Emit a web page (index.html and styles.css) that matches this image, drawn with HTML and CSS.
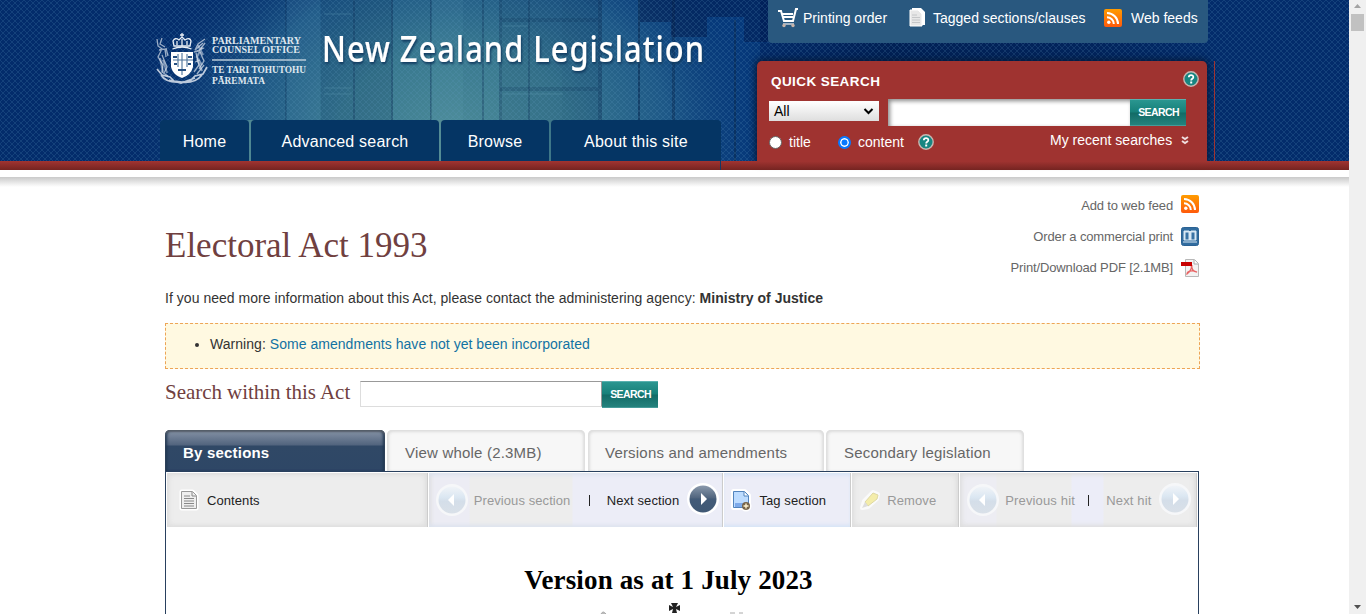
FILE: index.html
```html
<!DOCTYPE html>
<html lang="en">
<head>
<meta charset="utf-8">
<title>Electoral Act 1993 – New Zealand Legislation</title>
<link rel="stylesheet" href="styles.css">
</head>
<body>
<svg class="defs" width="0" height="0">
  <defs>
    <linearGradient id="orange" x2="0" y2="1"><stop stop-color="#ff9c00"/><stop offset="1" stop-color="#ff5a0c"/></linearGradient>
    <linearGradient id="orb" x2="0" y2="1"><stop stop-color="#8a99ac"/><stop offset=".45" stop-color="#52667f"/><stop offset=".5" stop-color="#435b78"/><stop offset="1" stop-color="#3f5874"/></linearGradient>
    <linearGradient id="pale" x2="0" y2="1"><stop stop-color="#f1f4f8"/><stop offset=".4" stop-color="#dbe7f2"/><stop offset=".55" stop-color="#d4dee9"/><stop offset="1" stop-color="#d9e0e8"/></linearGradient>
    <symbol id="feed" viewBox="0 0 18 18"><rect width="18" height="18" rx="2" fill="url(#orange)"/><circle cx="4.8" cy="13.3" r="1.7" fill="#fff"/><path d="M3 8.2a6.800 6.800 0 0 1 6.800 6.800M3 4a11 11 0 0 1 11 11" fill="none" stroke="#fff" stroke-width="2"/></symbol>
    <symbol id="help" viewBox="0 0 16 16"><circle cx="8" cy="8" r="7.2" fill="#178681" stroke="#c8b8b2" stroke-width="1.4"/><path d="M5.800 6.200c.1-2.800 4.700-2.700 4.500 0-.1 1.700-2.100 1.500-2.100 3.200" fill="none" stroke="#fff" stroke-width="1.8"/><rect x="7.2" y="10.5" width="2" height="2" fill="#fff"/></symbol>
    <symbol id="left" viewBox="0 0 32 32"><circle cx="16" cy="16" r="16" fill="#f6f7f9"/><circle cx="16" cy="16" r="13.5" fill="url(#pale)"/><path d="M18 10v12l-6-6z" fill="#fff"/></symbol>
    <symbol id="right-pale" viewBox="0 0 32 32"><circle cx="16" cy="16" r="16" fill="#f6f7f9"/><circle cx="16" cy="16" r="13.5" fill="url(#pale)"/><path d="M14 10v12l6-6z" fill="#fff"/></symbol>
    <symbol id="right" viewBox="0 0 32 32"><circle cx="16" cy="16" r="16" fill="#fff"/><circle cx="16" cy="16" r="13.5" fill="url(#orb)"/><path d="M14 10v12l6-6z" fill="#fff"/></symbol>
  </defs>
</svg>
<div class="page">
  <header class="header">
    <svg class="backdrop" width="1349" height="161" viewBox="0 0 1349 161">
      <defs>
        <pattern id="weave" width="6" height="6" patternUnits="userSpaceOnUse"><path d="M0 0l6 6M6 0L0 6" stroke="#5f9ac0" stroke-opacity=".24" stroke-width=".8"/></pattern>
        <radialGradient id="glow" gradientUnits="userSpaceOnUse" cx="0" cy="0" r="1" gradientTransform="translate(455 135) scale(330 250)"><stop stop-color="#4b8a97"/><stop offset=".35" stop-color="#38788f"/><stop offset=".65" stop-color="#205b88" stop-opacity=".9"/><stop offset="1" stop-color="#042f70" stop-opacity="0"/></radialGradient>
        <linearGradient id="shade"><stop stop-color="#001844" stop-opacity="0"/><stop offset=".3" stop-color="#001844" stop-opacity=".7"/><stop offset=".75" stop-color="#001844" stop-opacity=".45"/><stop offset="1" stop-color="#001844" stop-opacity="0"/></linearGradient>
      </defs>
      <rect width="1349" height="161" fill="#032c6b"/>
      <rect x="600" width="160" height="161" fill="#073e81" opacity=".75"/>
      <rect x="100" width="690" height="161" fill="url(#glow)"/>
      <g fill="#0a2b53">
        <rect x="285" width="1.500" height="120" opacity=".3"/><rect x="287" width="33" height="120" fill="#73b8cc" opacity=".08"/>
        <rect x="321" width="32" height="120" opacity=".14"/><rect x="353" width="2" height="120" opacity=".4"/>
        <rect x="355" width="36" height="120" opacity=".15"/><rect x="391" width="2" height="120" opacity=".4"/>
        <rect x="430" width="1.500" height="120" opacity=".4"/><rect x="432" width="31" height="120" fill="#83cbd1" opacity=".07"/>
        <rect x="482" width="2" height="120" opacity=".3"/><rect x="499" width="3" height="120" opacity=".3"/>
        <rect x="502" width="60" height="120" opacity=".1"/><rect x="528" width="2" height="120" opacity=".3"/><rect x="562" width="36" height="120" opacity=".15"/>
        <rect x="598" width="4" height="120" opacity=".4"/><rect x="638" width="2" height="120" opacity=".6"/><rect x="672" width="3" height="120" opacity=".5"/>
        <rect x="734" y="20" width="2" height="141" opacity=".6"/><rect x="500" y="18" width="98" height="4" opacity=".2"/><rect x="500" y="87" width="98" height="4" opacity=".2"/>
      </g>
      <path d="M324 14h27M324 88h27M324 94h27M503 26h25M503 94h60" stroke="#69a9b9" stroke-opacity=".3"/>
      <path d="M640 0h128v17h-61v20h-36V22h-31zM744 17h25v25h-25z" fill="#001240" opacity=".4"/>
      <rect x="740" y="43" width="478" height="20" fill="url(#shade)" opacity=".8"/>
      <rect width="1349" height="161" fill="url(#weave)"/>
    </svg>
    <div class="brand-side">
      <svg class="brand" width="560" height="120" viewBox="155 0 560 120" fill="#fff">
        <g stroke="#e8eef5" fill="none" stroke-width="1.3">
          <path d="M174 46l-1-5q2-4 6-1l3-3 3 3q5-3 6 1l-1 5zM182 37v-4M180 35h4" stroke-width="1.3"/>
          <path d="M172.500 49q10-4 19 0M177 41v4M182 39v7M187 41v4"/>
          <path d="M157 39l1 7 4 3-4 8 5 8-1 7 6 4M162 38l-2 6 5 3M159 50l6-1 1 8M162 55l5 12-3 6M166 48l2 8M205 39l-7 5-3 6 8-7M205 43l-6 8-5 1 10-4M200 52l4 9-5 8M196 53l3 12-5 7M200 60l-5 2M204 65l-7 9" opacity=".65"/>
          <path d="M198 45l5 10M202 47l-5 10 5 8M197 59l5 12M160 58l3 14M163 60l4 13" stroke-width="2" opacity=".5"/>
          <path d="M157 69l5 6 8 2 4 4 8 1 8-1 5-5 8-2 4-7M161 75q5 8 19 7 15 2 22-7M169 80l12 3 14-5" opacity=".8" stroke-width="1.7"/>
        </g>
        <path d="M171 52h22v15q-2 8-11 11-9-3-11-11z"/>
        <path d="M178 54v13M187 54v13M173 60h20M182 53v22" stroke="#4c739a" stroke-width="1.1"/>
        <path d="M173 57h4M188 57h4M174 64h3M188 64h3M178 70h8" stroke="#244f81" stroke-width="2"/>
        <g class="office" fill="#dfe7ee">
          <text x="212" y="43.500" textLength="89" lengthAdjust="spacingAndGlyphs">PARLIAMENTARY</text>
          <text x="212" y="53.200" textLength="88" lengthAdjust="spacingAndGlyphs">COUNSEL OFFICE</text>
          <text x="212" y="73" textLength="94" lengthAdjust="spacingAndGlyphs">TE TARI TOHUTOHU</text>
          <text x="212" y="83.500" textLength="53" lengthAdjust="spacingAndGlyphs">PĀREMATA</text>
        </g>
        <path d="M212 60h94" stroke="#b8cbd9" stroke-width="1.7"/>
        <text class="site-title" x="322" y="62" textLength="383" lengthAdjust="spacingAndGlyphs">New Zealand Legislation</text>
      </svg>
      <nav class="nav"><a class="home">Home</a><a class="advanced">Advanced search</a><a class="browse">Browse</a><a class="about">About this site</a></nav>
    </div>
    <div class="tool-side">
      <div class="tools">
        <svg width="22" height="20" viewBox="0 0 22 20"><path d="M1 3h3l3 10h9l3-12h2M5 6h11M6 9h10" fill="none" stroke="#fff" stroke-width="2"/><path d="M6 16h11" stroke="#d7dce2" stroke-width="1.4"/><circle cx="7" cy="17.5" r="1.7" fill="#c9b4a9"/><circle cx="16" cy="17.5" r="1.7" fill="#c9b4a9"/></svg><span class="print-link">Printing order</span>
        <svg width="17" height="19" viewBox="0 0 17 19"><path d="M3 0h9l4 4v13H3z" fill="#fff"/><path d="M1 2h8l4 4v12H1z" fill="#e7e7e7" stroke="#fff"/><path d="M3 7h5M3 9.500h8M3 12h8M3 14.500h8" stroke="#c4c6c8"/></svg><span class="tag-link">Tagged sections/clauses</span>
        <svg width="18" height="19" viewBox="0 -1 18 19"><use href="#feed" width="18" height="18"/></svg><span>Web feeds</span>
      </div>
      <form class="quick">
        <div class="quick-head"><b>QUICK SEARCH</b><svg width="16" height="16"><use href="#help"/></svg></div>
        <div class="quick-line">
          <div class="select">All<svg width="11" height="7" viewBox="0 0 11 7"><path d="M1.500 1l4 4 4-4" fill="none" stroke="#000" stroke-width="2"/></svg></div>
          <input class="query" type="text" aria-label="Search"><span class="search-button">SEARCH</span>
        </div>
        <div class="quick-options"><i class="radio"></i><span class="title-label">title</span><i class="radio selected"></i><span class="content-label">content</span><svg width="16" height="16"><use href="#help"/></svg><span class="recent">My recent searches</span><svg class="chevrons" width="8" height="9" viewBox="0 0 8 9"><path d="M1 1l3 2 3-2M1 5l3 2 3-2" fill="none" stroke="#f0dede" stroke-width="2"/></svg></div>
      </form>
    </div>
  </header>
  <div class="red-strip"></div>
  <div class="header-shadow"></div>
  <main class="content">
    <div class="title-row">
      <h1>Electoral Act 1993</h1>
      <div class="actions">
        <a><span>Add to web feed</span><svg class="feed-icon" width="18" height="18"><use href="#feed"/></svg></a>
        <a><span>Order a commercial print</span><svg width="18" height="19" viewBox="0 0 18 19"><rect x=".5" y=".5" width="17" height="18" rx="2" fill="#316c9f" stroke="#2b6294"/><path d="M3 4h5l1 1 1-1h5v9H3zM2 15h14" fill="#d9e8f4" stroke="#d9e8f4" stroke-width="1"/><path d="M4.500 5.500h3v7h-3zM10.500 5.500h3v7h-3z" fill="#3972a4"/></svg></a>
        <a><span>Print/Download PDF [2.1MB]</span><svg width="18" height="18" viewBox="0 0 18 18"><path d="M4.500.5h9l4 4v13h-13z" fill="#f3f3f3" stroke="#b8b8b8"/><path d="M13 1v4h4" fill="#fff" stroke="#aaa"/><path d="M9 6c3 1 1 6-3 9 0-3 5-4 10-2-4 0-6-4-5-7" fill="none" stroke="#e86666" stroke-width="1.300"/><path d="M0 3h11v4H0z" fill="#c80000"/></svg></a>
      </div>
    </div>
    <p class="agency">If you need more information about this Act, please contact the administering agency: <b>Ministry of Justice</b></p>
    <div class="warning"><i></i><span>Warning: <a>Some amendments have not yet been incorporated</a></span></div>
    <div class="search-within"><h2>Search within this Act</h2><input type="text" aria-label="Search within this Act"><span class="search-button">SEARCH</span></div>
    <div class="tabs"><b class="tab active">By sections</b><span class="tab whole">View whole (2.3MB)</span><span class="tab versions">Versions and amendments</span><span class="tab secondary">Secondary legislation</span></div>
    <section class="document">
      <div class="toolbar">
        <div class="cell contents"><svg width="20" height="22" viewBox="0 0 20 22"><path d="M2.500 2.500h11l4 4v13h-15z" fill="#f3f3f3" stroke="#fff" stroke-width="4" stroke-linejoin="round"/><path d="M2.500 2.500h11l4 4v13h-15z" fill="#efefef" stroke="#999"/><path d="M13 3v4h4M5 7h6M5 9.500h10M5 12h10M5 14.500h10M5 17h10" fill="none" stroke="#888"/></svg><span>Contents</span></div>
        <div class="cell sections"><svg width="32" height="32"><use href="#left"/></svg><span class="muted prev">Previous section</span><i class="bar"></i><span class="next">Next section</span><svg class="go" width="32" height="32"><use href="#right"/></svg></div>
        <div class="cell tag"><svg width="22" height="24" viewBox="0 0 22 24"><path d="M3.500 3.500h11l4 4v12h-15z" stroke="#fff" stroke-width="5" stroke-linejoin="round"/><circle cx="16" cy="18" r="5.500" fill="#fff"/><path d="M3.500 3.500h11l4 4v12h-15z" fill="#bddcff" stroke="#5384bd"/><path d="M14 4v4h4" fill="#fff" stroke="#5384bd"/><path d="M5 16h10M5 18h10" stroke="#3f79d4"/><circle cx="16" cy="18" r="4" fill="#77654b"/><path d="M13.500 18h5M16 15.500v5" stroke="#fff3cf" stroke-width="1.400"/></svg><span>Tag section</span></div>
        <div class="cell remove"><svg width="23" height="22" viewBox="0 0 23 22"><path d="M3 19l2-7 9-9 5 2-1 5-9 8z" fill="#fff" stroke="#fafafa" stroke-width="4" stroke-linejoin="round"/><path d="M6 13l8-9 5 2-1 4-9 7z" fill="#f4edaa" stroke="#ded8a3"/><path d="M6 13l3 4-6 2z" fill="#ddd"/></svg><span class="muted">Remove</span></div>
        <div class="cell hits"><svg width="32" height="32"><use href="#left"/></svg><span class="muted prev-hit">Previous hit</span><i class="bar"></i><span class="muted next-hit">Next hit</span><svg class="go" width="32" height="32"><use href="#right-pale"/></svg></div>
      </div>
      <h3>Version as at 1 July 2023</h3>
      <svg class="crest" width="160" height="12" viewBox="0 0 160 12"><path d="M75 1h7l-2 4 4-2v6l-4-2 1 4h-5l1-4-4 2V3l4 2z" fill="#222"/><path d="M5 12q2-4 5 0M134 11h5M143 11h4" stroke="#aaa" fill="#bbb"/></svg>
    </section>
  </main>
</div>
<div class="scrollbar"><svg width="17" height="14" viewBox="0 0 17 14"><path d="M5 8l3.500-4L12 8z" fill="#a3a3a3"/></svg><i></i><svg width="17" height="14" viewBox="0 0 17 14"><path d="M5 5l3.500 4L12 5z" fill="#505050"/></svg></div>
</body>
</html>
```
FILE: styles.css
```css
* { box-sizing: border-box; }
body { margin: 0; width: 1366px; height: 614px; overflow: hidden; display: flex; font-family: "Liberation Sans", Arial, sans-serif; font-size: 14px; color: #333; background: #fff; }
svg { display: block; flex: none; }
.defs { position: absolute; }
h1, h2, h3, p { margin: 0; }
.page { width: 1349px; height: 614px; overflow: hidden; }
.header { position: relative; display: flex; width: 1349px; height: 161px; padding-left: 155px; }
.backdrop { position: absolute; inset: 0; }
.brand-side { position: relative; width: 602px; height: 161px; }
.brand { overflow: visible; }
.office { font: bold 10.5px "Liberation Serif", serif; }
.site-title { font: 500 37px "Noto Sans", sans-serif; letter-spacing: 1.2px; stroke: #fff; stroke-width: .2px; filter: drop-shadow(1px 2px 1px #123c61); }
.nav { display: flex; gap: 2px; margin-left: 5px; width: 561px; background: linear-gradient(90deg, transparent 80px, #4f8792 90px, #568e96 270px, #3c7587 400px, transparent 410px); }
.nav a { height: 41px; border-radius: 4px 4px 0 0; background: #053564; color: #fff; font-size: 16px; letter-spacing: .22px; line-height: 43px; text-align: center; }
.home { width: 89px; } .advanced { width: 188px; } .browse { width: 108px; }
.about { position: relative; width: 170px; }
.about::after { content: ""; position: absolute; z-index: 2; right: 0; top: 41px; width: 1px; height: 9px; background: #163865; }
.tool-side { position: relative; width: 458px; }
.tools { display: flex; width: 440px; height: 43px; margin-left: 11px; padding: 8px 0 0 9px; background: #29587f; border-radius: 0 0 4px 4px; color: #fff; line-height: 20px; }
.tools span { margin-left: 4px; white-space: nowrap; }
.tools .print-link { width: 106px; }
.tools .tag-link { width: 171px; margin-left: 7px; }
.tools span:last-child { margin-left: 9px; }
.quick { height: 100px; width: 450px; margin-top: 18px; background: #9f3330; border-radius: 5px 5px 0 0; color: #fff; padding: 10px 8px 0 12px; box-shadow: 0 0 7px 2px #041b3d; position: relative; }
.quick::after { content: ""; position: absolute; right: -8px; top: 0; height: 100px; width: 1px; background: #9f3330; }
.quick-head { display: flex; justify-content: space-between; height: 28px; padding-left: 2px; line-height: 21px; }
.quick-head b { font-size: 13.5px; letter-spacing: .42px; }
.quick-line { display: flex; }
.select { display: flex; align-items: center; justify-content: space-between; width: 110px; height: 20px; margin-top: 2px; padding: 0 5px; background: linear-gradient(#fff, #dedede); color: #000; }
.query { width: 242px; height: 27px; margin-left: 9px; border: 0; padding: 3px; box-shadow: inset 2px 2px 4px #888; background: #fff; outline: 0; }
.search-button { display: block; width: 56px; height: 27px; border-top: 1px solid #58b1af; border-bottom: 1px solid #469b99; background: linear-gradient(#2a9690, #168079 48%, #126b66 52%, #24827d); color: #fff; font-size: 10.5px; font-weight: bold; letter-spacing: -.6px; line-height: 25px; text-align: center; padding-left: 1px; }
.quick-options { display: flex; align-items: center; height: 32px; line-height: 20px; padding: 0 8px 0 0; }
.radio { flex: none; width: 13px; height: 13px; background: #fff; border: 1px solid #666; border-radius: 50%; }
.radio.selected { border: 2px solid #0878ff; background: #0878ff; box-shadow: inset 0 0 0 1.5px #fff; }
.title-label { width: 49px; margin-left: 7px; } .content-label { width: 54px; margin-left: 7px; margin-right: 6px; }
.recent { width: 124px; margin-left: auto; white-space: nowrap; margin-top: -4px; } .chevrons { margin: -3px 2px 0 7px; }
.red-strip { position: relative; height: 9px; background: linear-gradient(#a13431, #752421); }
.header-shadow { height: 17px; background: linear-gradient(#fff 7px, #c9c9c9 7px, #f5f5f5 15px, #fff 17px); }
.content { width: 1035px; margin-left: 165px; }
.title-row { display: flex; justify-content: space-between; height: 101px; padding-top: 6px; }
h1 { padding-top: 32px; font: 35px/42px "Liberation Serif", serif; color: #704040; box-sizing: content-box; height: 42px; }
.actions { display: flex; flex-direction: column; gap: 12px; color: #666; font-size: 13px; letter-spacing: -.14px; padding: 3px 1px 0 0; }
.actions a { height: 19px; display: flex; justify-content: flex-end; align-items: center; }
.actions svg { margin-left: 8px; }
.actions .feed-icon { margin-top: -3px; }
.agency { height: 35px; line-height: 20px; letter-spacing: .035px; }
.warning { display: flex; align-items: flex-start; width: 1035px; height: 46px; padding: 10px 0 0 29px; border: 1px dashed #eda556; background: #fff9e1; line-height: 20px; letter-spacing: .04px; }
.warning i { width: 4px; height: 4px; margin: 9px 11px 0 0; border-radius: 50%; background: #333; }
.warning a { color: #1272a3; }
.search-within { display: flex; padding-top: 12px; height: 61px; }
h2 { width: 195px; margin-top: -1px; font: 21px/24px "Liberation Serif", serif; letter-spacing: -.04px; color: #704040; white-space: nowrap; }
.search-within input { width: 242px; height: 26px; border: 1px solid #ddd; border-top-color: #999; border-right-color: #999; padding: 2px; }
.tabs { display: flex; height: 41px; }
.tab { height: 41px; line-height: 46px; padding-left: 16px; font-size: 15px; color: #666; background: #f7f7f7; border-radius: 5px 5px 0 0; box-shadow: inset 0 3px 3px -1px #ddd, inset -3px 0 3px -1px #ddd, inset 3px 0 3px -1px #ddd; letter-spacing: .2px; }
.tab.active { width: 220px; padding-left: 18px; color: #fff; background: linear-gradient(#8794a7, #52647e 15px, #304866 16px, #2e4766); box-shadow: inset 0 2px 2px #555d68, inset 3px 0 3px -1px #1d3350, inset -3px 0 3px -1px #1d3350; }
.whole { width: 198px; margin-left: 2px; padding-left: 18px; } .versions { width: 236px; margin-left: 3px; padding-left: 17px; } .secondary { width: 198px; margin-left: 2px; padding-left: 18px; }
.document { width: 1034px; height: 200px; border: 1px solid #29405e; border-bottom: 0; padding: 1px; }
.toolbar { display: flex; height: 54px; gap: 1px; color: #222; font-size: 13px; letter-spacing: .08px; }
.cell { display: flex; align-items: center; height: 54px; background: #ededed; box-shadow: inset 0 0 5px 2px #ddd; border-right: 1px solid #ccc; white-space: nowrap; }
.cell svg { margin-top: -1px; }
.muted { color: #999; }
.contents { width: 261px; padding-left: 12px; } .contents span { margin-left: 8px; }
.sections { width: 295px; padding-left: 7px; background: linear-gradient(90deg, #ececf4 40px, #ededed 41px, #ededed 143px, #ecedf7 144px); box-shadow: inset 0 4px 4px -2px #dce3ef, inset 0 -4px 4px -2px #dce3ef, inset 4px 0 4px -2px #ddd; }
.prev { width: 97px; margin-left: 6px; } .bar { width: 1px; height: 11px; margin-left: 18px; background: #222; } .next { width: 73px; margin-left: 17px; } .cell .go { margin: -3px 0 0 7px; }
.tag { width: 127px; padding-left: 6px; background: #ecedf7; box-shadow: inset 0 4px 4px -2px #d5e3f6, inset 0 -4px 4px -2px #d5e3f6; } .tag span { margin-left: 7px; }
.remove { width: 107px; padding-left: 7px; } .remove span { margin-left: 5px; }
.hits { width: 237px; padding-left: 7px; background: linear-gradient(90deg, #ededf3 36px, #ededed 37px, #ededed 111px, #ecedf8 112px, #ecedf8 143px, #ededed 144px); }
.prev-hit { width: 70px; margin-left: 6px; letter-spacing: .15px; } .hits .bar { margin-left: 13px; } .next-hit { width: 46px; margin-left: 17px; letter-spacing: .15px; }
h3 { margin-top: 37px; width: 1003px; text-align: center; color: #000; font: bold 27px/32px "Liberation Serif", serif; letter-spacing: .15px; }
.crest { margin: 6px 0 0 429px; }
.scrollbar { display: flex; flex-direction: column; width: 17px; height: 614px; background: #f0f0f0; }
.scrollbar i { width: 13px; height: 17px; margin: 0 0 569px 2px; background: #c1c1c1; flex: none; }
```
